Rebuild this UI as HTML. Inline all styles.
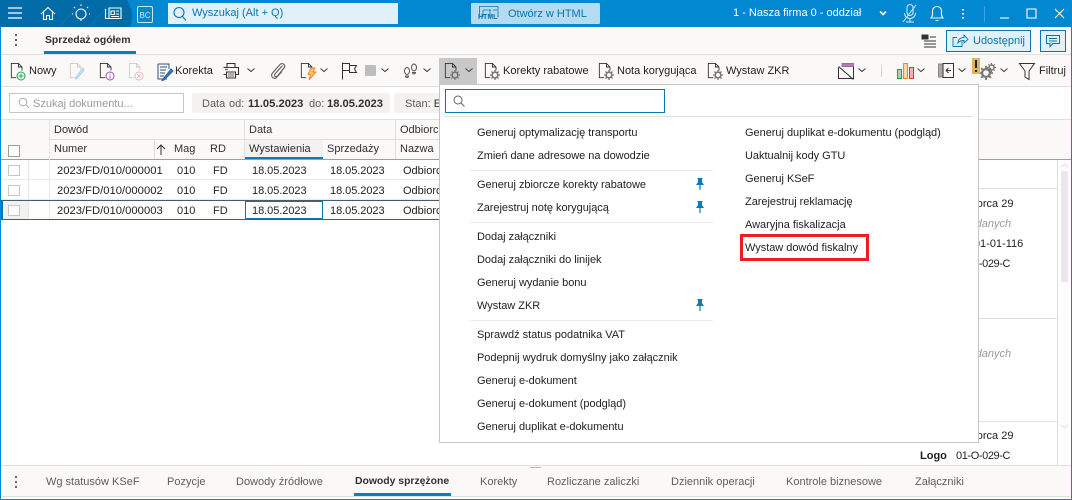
<!DOCTYPE html>
<html lang="pl"><head><meta charset="utf-8"><title>Sprzedaż ogółem</title>
<style>
*{box-sizing:border-box}
html,body{margin:0;padding:0;background:#fff}
body{width:1072px;height:500px;overflow:hidden;position:relative;font-family:"Liberation Sans",Arial,sans-serif;font-size:11px;color:#201f1e}
.a,.t,svg.i{position:absolute}
.t{white-space:nowrap;line-height:16px;height:16px;margin-top:1px}
.g{color:#605e5c}
.h{color:#323130}
.d{font-size:11px;letter-spacing:-.05px}
.n{font-size:11.25px}
svg.i{overflow:visible;fill:none;stroke:#323130;stroke-width:1}
.m{font-size:11px;letter-spacing:-.03px}
</style></head><body>
<svg width="0" height="0" style="position:absolute">
<defs>
<symbol id="doc" viewBox="0 0 18 20" overflow="visible"><path d="M7 17.500H1.500V1.500h8l4 4v4M9.500 1.500v4h4" fill="none" stroke="currentColor"/></symbol>
<symbol id="chev" viewBox="0 0 8 5" overflow="visible"><path d="M.5 .5L4 3.500 7.500 .5" fill="none" stroke="#444" stroke-width="1.100"/></symbol>
<symbol id="gear" viewBox="0 0 10 10" overflow="visible"><circle cx="5" cy="5" r="2.800" fill="none" stroke="#777" stroke-width="1.600"/><path d="M5 0v2M5 8v2M0 5h2M8 5h2M1.500 1.500l1.400 1.400M7.100 7.100l1.400 1.400M8.500 1.500L7.100 2.900M2.900 7.100L1.500 8.500" stroke="#777" stroke-width="1.300"/></symbol>
<symbol id="pin" viewBox="0 0 10 12" overflow="visible"><path d="M2 0h6L7 1v3l2 3H1l2-3V1z" fill="#0a7cb8"/><path d="M5 6v6" stroke="#0a7cb8" stroke-width="1.200"/></symbol>
</defs>
</svg>

<!-- title bar -->
<div class="a" style="left:0;top:0;width:1072px;height:27px;background:#0288d1"></div>
<svg class="i" style="left:0;top:0;stroke:none" width="140" height="27"><path d="M0 0H127Q135 13 130 27H0z" fill="#006ba6"/><path d="M90 27L112 0M60 27L82 0" stroke="#0a78b4" stroke-width=".7"/></svg>
<svg class="i" style="left:0;top:0;stroke:#fff" width="140" height="27">
<path d="M8 8h14M8 13h14M8 18h14" stroke-width="1.200"/>
<path d="M41 14l7-6.500 7 6.500M43.500 12.500v7h3v-4h3v4h3v-7" stroke-width="1.100"/>
<circle cx="81" cy="14" r="5" stroke-width="1.100"/><path d="M81 19v2M81 4.500v1.500M73 14h-1M90 14h-1M75 8l-1-1M87 8l1-1" stroke-width="1.100"/>
<path d="M105.500 9v9.500h15.500V8h-12v10.500M111 11h3.500v3.500H111zM116 11h3M116 14h3M111 16.500h8" stroke-width="1.100"/>
</svg>
<div class="a" style="left:137px;top:6px;width:16px;height:17px;border:1px solid #cfe8f6;border-radius:2px;color:#cfe8f6;font-size:8px;line-height:17px;text-align:center">BC</div>
<div class="a" style="left:168px;top:3px;width:230px;height:21px;background:#e1f1fa"></div>
<svg class="i" style="left:172px;top:6px;stroke:#0a76ae" width="16" height="16"><circle cx="7" cy="6.500" r="5" stroke-width="1.100"/><path d="M10.500 10.500l3.500 4" stroke-width="1.100"/></svg>
<div class="t" style="left:192px;top:4px;color:#0a76ae;font-size:11px">Wyszukaj (Alt + Q)</div>
<div class="a" style="left:471px;top:3px;width:129px;height:21px;background:#b3dbf2;border-radius:1px"></div>
<svg class="i" style="left:479px;top:6px;stroke:#0a76ae" width="20" height="12"><path d="M0 .5h19M.5 .5v11M19 .5v11M4 4h8M14 4h4M4 4v7M11 4v7" stroke-width=".8"/></svg>
<div class="t" style="left:478px;top:12px;color:#0a76ae;font-size:7px;font-weight:bold;line-height:10px;height:10px">HTML</div>
<div class="t" style="left:508px;top:5px;color:#0a76ae;font-size:11px">Otwórz w HTML</div>
<div class="t" style="left:733px;top:4px;color:#fff;font-size:11px">1 - Nasza firma 0 - oddział</div>
<svg class="i" style="left:880px;top:0;stroke:#fff" width="192" height="27">
<path d="M0 11.500l3 3 3-3" stroke-width="1.700"/>
<path d="M27 7.500a3 3 0 0 1 6 0v5a3 3 0 0 1-6 0zM24.500 13a5.500 5.500 0 0 0 11 0M30 18.500v3M26 22h8M23 22L36 5" stroke-width="1" stroke="#d5ecf8"/>
<path d="M51 18c2-2 1.500-4 1.500-7a4.500 4.500 0 0 1 9 0c0 3-.5 5 1.500 7zM55.500 20.500h3" stroke-width="1.100" stroke="#e9f5fc"/>
<path d="M83 9v1.500M83 13v1.500M83 17v1.500" stroke-width="2"/>
<path d="M104.500 6v16" stroke="#3fa3dc"/>
<path d="M120 18h9" stroke-width="1.100"/><path d="M147 9h9v9h-9z" stroke-width="1.100"/><path d="M175 9l9 9M184 9l-9 9" stroke-width="1"/>
</svg>

<!-- outer window border -->
<div class="a" style="left:0;top:27px;width:1px;height:473px;background:#0288d1"></div>
<div class="a" style="left:1071px;top:27px;width:1px;height:473px;background:#0288d1"></div>
<div class="a" style="left:0;top:499px;width:1072px;height:1px;background:#0288d1"></div>

<!-- tab row -->
<div class="a" style="left:1px;top:27px;width:1070px;height:59px;background:#faf9f8"></div>
<div class="a" style="left:1px;top:54px;width:1070px;height:1px;background:#e1dfdd"></div>
<div class="a" style="left:1px;top:86px;width:1070px;height:1px;background:#e1dfdd"></div>
<svg class="i" style="left:13px;top:33px;stroke:none" width="6" height="14"><circle cx="3" cy="2" r="1.100" fill="#555"/><circle cx="3" cy="7" r="1.100" fill="#555"/><circle cx="3" cy="12" r="1.100" fill="#555"/></svg>
<div class="t" style="left:45px;top:32px;font-weight:bold;font-size:10.400px;color:#323130">Sprzedaż ogółem</div>
<div class="a" style="left:44px;top:51px;width:92px;height:3px;background:#0a7cc0"></div>
<svg class="i" style="left:921px;top:34px;stroke:#333" width="16" height="14"><path d="M1 1h6v4H1zM9 3h6M5 5v0M3 7h12M3 10h12M3 13h12" stroke-width="1"/><path d="M1 1h5v3H1z" fill="#333"/></svg>
<div class="a" style="left:946px;top:30px;width:85px;height:22px;background:#e1f1fa;border:1px solid #0a76ae"></div>
<svg class="i" style="left:952px;top:34px;stroke:#0a76ae" width="16" height="14"><path d="M10 7.500V12.500H1V3.500h4M6 9c0-4 3-5.500 6-5.500V1l4 4.500L12 9V6.500C9.500 6.500 7.500 7 6 9z" stroke-width=".9"/></svg>
<div class="t" style="left:973px;top:32px;color:#0a76ae;font-size:11px">Udostępnij</div>
<div class="a" style="left:1040px;top:30px;width:26px;height:22px;background:#e1f1fa;border:1px solid #0a76ae"></div>
<svg class="i" style="left:1046px;top:35px;stroke:#0a76ae" width="14" height="13"><path d="M.5 .5h13v8H7l-3 3v-3H.5zM3 3.500h8M3 6h8" stroke-width="1"/></svg>

<!-- toolbar -->
<div class="a" style="left:439px;top:58px;width:38px;height:26px;background:#c8c8c8"></div>
<svg class="i" style="left:10px;top:62px;color:#333" width="16" height="18"><use href="#doc" width="16" height="18"/></svg>
<svg class="i" style="left:16px;top:71px;stroke:#1aa34a" width="10" height="10"><circle cx="5" cy="5" r="4" fill="#fff"/><path d="M5 2.500v5M2.500 5h5"/></svg>
<div class="t" style="left:29px;top:62px">Nowy</div>
<svg class="i" style="left:69px;top:62px;color:#ccc" width="16" height="18"><use href="#doc" width="16" height="18"/></svg>
<svg class="i" style="left:75px;top:67px;stroke:#a9cfe8" width="10" height="12"><path d="M8 1L1 10l-.5 2 2-1L9 3z" fill="#cfe4f3"/></svg>
<svg class="i" style="left:99px;top:62px;color:#333" width="16" height="18"><use href="#doc" width="16" height="18"/></svg>
<svg class="i" style="left:105px;top:71px;stroke:#9b4fa8" width="10" height="10"><circle cx="5" cy="5" r="4" fill="#fff"/><path d="M5 4.500v3M5 2.500v1"/></svg>
<svg class="i" style="left:128px;top:62px;color:#ccc" width="16" height="18"><use href="#doc" width="16" height="18"/></svg>
<svg class="i" style="left:134px;top:71px;stroke:#f0b4b4" width="10" height="10"><circle cx="5" cy="5" r="4" fill="#fff"/><path d="M3.300 3.300l3.400 3.400M6.700 3.300l-3.400 3.400"/></svg>
<svg class="i" style="left:157px;top:62px;stroke:#2b5f9e" width="16" height="18"><path d="M1 2h11v5M1 2v15h9M3 5h7M3 8h6M3 11h5M3 14h4" stroke="#324f78"/><path d="M14 7L6 17l-1 1.500 2-.5 9-9z" fill="#2f7fc4"/></svg>
<div class="t" style="left:175px;top:62px">Korekta</div>
<svg class="i" style="left:223px;top:62px;stroke:#333" width="16" height="17"><path d="M4 5V1.500h8V5M.5 5.500h15v7h-3M3.500 12.500h-3M3.500 10h9v6h-9z" stroke-width="1.100"/><path d="M2 7.500h3" stroke="#0a7cc0" stroke-width="1.200"/><path d="M5 12h6M5 14h6" stroke-width=".8"/></svg>
<svg class="i" style="left:247px;top:68px" width="8" height="5"><use href="#chev" width="8" height="5"/></svg>
<svg class="i" style="left:270px;top:62px;stroke:#666" width="15" height="17"><path d="M12.500 3.500L5 12c-1.500 2 1 3.500 2.500 2L14 6c2-3-1.500-6-4-3.500L2.500 11C0 14 3.500 18 6.500 15.500L12 9.500" stroke-width="1.200"/></svg>
<svg class="i" style="left:300px;top:62px;color:#333" width="16" height="18"><use href="#doc" width="16" height="18"/></svg>
<svg class="i" style="left:307px;top:68px;stroke:#f08a24" width="9" height="13"><path d="M4 0h4L6 4h3L2 12l1.500-5.500H1z" fill="#fcc37d"/></svg>
<svg class="i" style="left:320px;top:68px" width="8" height="5"><use href="#chev" width="8" height="5"/></svg>
<svg class="i" style="left:342px;top:62px;stroke:#333" width="16" height="18"><path d="M.5 .5v17M.5 1.500h7v2h7l-2 3.500 2 3.500h-7v-2h-7" stroke-width="1"/><path d="M7.500 1.500v6.500"/></svg>
<div class="a" style="left:365px;top:65px;width:11px;height:11px;background:#bdbdbd;border-radius:1px"></div>
<svg class="i" style="left:381px;top:68px" width="8" height="5"><use href="#chev" width="8" height="5"/></svg>
<svg class="i" style="left:403px;top:63px;stroke:#555" width="16" height="16"><ellipse cx="4" cy="8" rx="2.500" ry="3.500"/><path d="M2.500 13a1.500 1.500 0 0 0 3 0z"/><ellipse cx="11" cy="4.500" rx="2.500" ry="3.500"/><path d="M9.500 9.500a1.500 1.500 0 0 0 3 0z"/></svg>
<svg class="i" style="left:423px;top:68px" width="8" height="5"><use href="#chev" width="8" height="5"/></svg>
<svg class="i" style="left:444px;top:62px;color:#333" width="16" height="18"><use href="#doc" width="16" height="18"/></svg>
<svg class="i" style="left:450px;top:70px;stroke:none" width="10" height="10"><use href="#gear" width="10" height="10"/></svg>
<svg class="i" style="left:465px;top:68px" width="8" height="5"><use href="#chev" width="8" height="5"/></svg>
<svg class="i" style="left:484px;top:62px;color:#333" width="16" height="18"><use href="#doc" width="16" height="18"/></svg>
<svg class="i" style="left:490px;top:70px;stroke:none" width="10" height="10"><use href="#gear" width="10" height="10"/></svg>
<div class="t" style="left:503px;top:62px">Korekty rabatowe</div>
<svg class="i" style="left:598px;top:62px;color:#333" width="16" height="18"><use href="#doc" width="16" height="18"/></svg>
<svg class="i" style="left:604px;top:70px;stroke:none" width="10" height="10"><use href="#gear" width="10" height="10"/></svg>
<div class="t" style="left:617px;top:62px">Nota korygująca</div>
<svg class="i" style="left:707px;top:62px;color:#333" width="16" height="18"><use href="#doc" width="16" height="18"/></svg>
<svg class="i" style="left:713px;top:70px;stroke:none" width="10" height="10"><use href="#gear" width="10" height="10"/></svg>
<div class="t" style="left:726px;top:62px">Wystaw ZKR</div>
<svg class="i" style="left:838px;top:63px;stroke:#333" width="16" height="17"><path d="M4 .5h11.500v3H4z" fill="#b57ab5" stroke="#a868a8"/><path d="M15.500 3.500v12H.5v-11"/><path d="M.5 3.500l15 13" stroke-width="1.100"/></svg>
<svg class="i" style="left:858px;top:68px" width="8" height="5"><use href="#chev" width="8" height="5"/></svg>
<div class="a" style="left:881px;top:65px;width:1px;height:12px;background:#d5d3d1"></div>
<svg class="i" style="left:897px;top:63px" width="17" height="16"><path d="M.5 6.500h4v9h-4z" fill="#a5d6b2" stroke="#1aa34a"/><path d="M6.500 .5h4v15h-4z" fill="#fbd9a5" stroke="#ef8a1d"/><path d="M12.500 4.500h4v11h-4z" fill="#f7aeae" stroke="#e8333a"/></svg>
<svg class="i" style="left:917px;top:68px" width="8" height="5"><use href="#chev" width="8" height="5"/></svg>
<svg class="i" style="left:938px;top:63px;stroke:#333" width="16" height="15"><path d="M.5 1h4.500v13H.5z" fill="#aaa" stroke="#888"/><path d="M5 .5h10.500v14H5z" stroke-width="1"/><path d="M8 7.500h5M8 7.500l2.500-2.500M8 7.500l2.500 2.500"/></svg>
<svg class="i" style="left:958px;top:68px" width="8" height="5"><use href="#chev" width="8" height="5"/></svg>
<svg class="i" style="left:979px;top:66px;stroke:none" width="14" height="14"><use href="#gear" width="14" height="14"/></svg>
<svg class="i" style="left:987px;top:63px;stroke:none" width="9" height="9"><use href="#gear" width="9" height="9"/></svg>
<div class="a" style="left:972px;top:58px;width:8px;height:16px;background:#deb35f"></div>
<div class="a" style="left:975px;top:60px;width:2px;height:8px;background:#222"></div>
<div class="a" style="left:975px;top:70px;width:2px;height:2px;background:#222"></div>
<svg class="i" style="left:1000px;top:68px" width="8" height="5"><use href="#chev" width="8" height="5"/></svg>
<svg class="i" style="left:1019px;top:63px;stroke:#333" width="16" height="17"><path d="M.5 .5h15L10 8v8.500L6 14V8z"/></svg>
<div class="t" style="left:1039px;top:62px">Filtruj</div>

<!-- filter row -->
<div class="a" style="left:9px;top:93px;width:175px;height:20px;border:1px solid #c8c6c4;background:#fff"></div>
<svg class="i" style="left:18px;top:97px;stroke:#aaa" width="12" height="12"><circle cx="5" cy="5" r="3.800"/><path d="M8 8l3 3"/></svg>
<div class="t" style="left:33px;top:95px;color:#999">Szukaj dokumentu...</div>
<div class="a" style="left:192px;top:93px;width:198px;height:20px;background:#f3f2f1;border-radius:2px"></div>
<div class="t g" style="left:202px;top:95px">Data</div>
<div class="t g" style="left:229px;top:95px">od:</div>
<div class="t h" style="left:248px;top:95px;font-weight:bold;font-size:11.200px">11.05.2023</div>
<div class="t g" style="left:309px;top:95px">do:</div>
<div class="t h" style="left:327px;top:95px;font-weight:bold;font-size:11.200px">18.05.2023</div>
<div class="a" style="left:394px;top:93px;width:60px;height:20px;background:#f3f2f1;border-radius:2px"></div>
<div class="t g" style="left:405px;top:95px">Stan: <span class="h">E</span></div>

<!-- grid -->
<div class="a" style="left:1px;top:119px;width:1070px;height:40px;background:#faf9f8"></div>
<div class="a" style="left:1px;top:119px;width:1070px;height:1px;background:#e1dfdd"></div>
<div class="a" style="left:49px;top:139px;width:930px;height:1px;background:#e1dfdd"></div>
<div class="a" style="left:1px;top:159px;width:1070px;height:1px;background:#a19f9d"></div>
<div class="a" style="left:49px;top:120px;width:1px;height:99px;background:#e8e6e4"></div>
<div class="a" style="left:244px;top:120px;width:1px;height:39px;background:#e1dfdd"></div>
<div class="a" style="left:395px;top:120px;width:1px;height:39px;background:#e1dfdd"></div>
<div class="a" style="left:154px;top:140px;width:1px;height:19px;background:#e1dfdd"></div>
<div class="a" style="left:28px;top:160px;width:1px;height:59px;background:#e8e6e4"></div>
<div class="a" style="left:245px;top:140px;width:78px;height:19px;background:#f3f2f1"></div>
<div class="a" style="left:245px;top:157px;width:78px;height:2px;background:#0a7cc0"></div>
<div class="t h" style="left:54px;top:121px">Dowód</div>
<div class="t h" style="left:249px;top:121px">Data</div>
<div class="t h" style="left:400px;top:121px">Odbiorca</div>
<div class="t h" style="left:54px;top:140px">Numer</div>
<svg class="i" style="left:156px;top:144px;stroke:#333" width="10" height="11"><path d="M5 1v10M1 5l4-4 4 4"/></svg>
<div class="t h" style="left:174px;top:140px">Mag</div>
<div class="t h" style="left:210px;top:140px">RD</div>
<div class="t h" style="left:249px;top:140px">Wystawienia</div>
<div class="t h" style="left:327px;top:140px">Sprzedaży</div>
<div class="t h" style="left:400px;top:140px">Nazwa</div>
<div class="a" style="left:8px;top:145px;width:12px;height:12px;border:1px solid #a19f9d;background:#fff"></div>
<div class="a" style="left:1px;top:179px;width:440px;height:1px;background:#edebe9"></div>
<div class="a" style="left:1px;top:199px;width:440px;height:1px;background:#edebe9"></div>
<div class="a" style="left:8px;top:165px;width:12px;height:11px;border:1px solid #c8c6c4"></div>
<div class="a" style="left:8px;top:185px;width:12px;height:11px;border:1px solid #c8c6c4"></div>
<div class="a" style="left:1px;top:200px;width:440px;height:20px;border-top:1px solid #3e5f74;border-bottom:1px solid #3e5f74"></div>
<div class="a" style="left:3px;top:201px;width:25px;height:18px;background:#f3f2f1"></div>
<div class="a" style="left:1px;top:201px;width:2px;height:18px;background:#0a76ae"></div>
<div class="a" style="left:8px;top:205px;width:12px;height:11px;border:1px solid #c8c6c4;background:#fff"></div>
<div class="a" style="left:245px;top:201px;width:78px;height:18px;border:1px solid #0a76ae;border-width:1px 1.500px"></div>
<div class="t n" style="left:57px;top:162px">2023/FD/010/000001</div>
<div class="t" style="left:177px;top:162px">010</div><div class="t" style="left:213px;top:162px">FD</div><div class="t d" style="left:252px;top:162px">18.05.2023</div><div class="t d" style="left:330px;top:162px">18.05.2023</div><div class="t" style="left:403px;top:162px">Odbiorca</div>
<div class="t n" style="left:57px;top:182px">2023/FD/010/000002</div>
<div class="t" style="left:177px;top:182px">010</div><div class="t" style="left:213px;top:182px">FD</div><div class="t d" style="left:252px;top:182px">18.05.2023</div><div class="t d" style="left:330px;top:182px">18.05.2023</div><div class="t" style="left:403px;top:182px">Odbiorca</div>
<div class="t n" style="left:57px;top:202px">2023/FD/010/000003</div>
<div class="t" style="left:177px;top:202px">010</div><div class="t" style="left:213px;top:202px">FD</div><div class="t d" style="left:252px;top:202px">18.05.2023</div><div class="t d" style="left:330px;top:202px">18.05.2023</div><div class="t" style="left:403px;top:202px">Odbiorca</div>

<!-- right detail pane -->
<div class="a" style="left:900px;top:188px;width:157px;height:1px;background:#e1dfdd"></div>
<div class="a" style="left:900px;top:318px;width:157px;height:1px;background:#e1dfdd"></div>
<div class="a" style="left:900px;top:421px;width:157px;height:1px;background:#e1dfdd"></div>
<div class="a" style="left:1057px;top:160px;width:1px;height:305px;background:#e1dfdd"></div>
<div class="a" style="left:1061px;top:171px;width:7px;height:111px;background:#e8e8e8"></div>
<svg class="i" style="left:1060px;top:163px;stroke:#ddd" width="9" height="5"><path d="M1 4l3.500-3L8 4"/></svg>
<svg class="i" style="left:1060px;top:424px;stroke:#ddd" width="9" height="5"><path d="M1 1l3.500 3L8 1"/></svg>
<div class="t" style="left:926px;top:195px">Ulica Odbiorca 29</div>
<div class="t" style="left:950px;top:215px;color:#999;font-style:italic">Brak danych</div>
<div class="t" style="left:936px;top:235px">00-001-01-01-116</div>
<div class="t" style="left:956px;top:255px;letter-spacing:-.4px">01-O-029-C</div>
<div class="t" style="left:950px;top:345px;color:#999;font-style:italic">Brak danych</div>
<div class="t" style="left:926px;top:427px">Ulica Odbiorca 29</div>
<div class="t" style="left:920px;top:447px;font-weight:bold">Logo</div>
<div class="t" style="left:956px;top:447px;letter-spacing:-.4px">01-O-029-C</div>

<!-- dropdown menu -->
<div class="a" style="left:439px;top:84px;width:540px;height:359px;background:#fff;border:1px solid #c8c6c4"></div>
<div class="a" style="left:445px;top:89px;width:220px;height:24px;border:1px solid #0a76ae;background:#fff"></div>
<svg class="i" style="left:453px;top:95px;stroke:#666" width="12" height="12"><circle cx="5" cy="5" r="4"/><path d="M8 8l3.500 3.500"/></svg>
<div class="a" style="left:445px;top:116px;width:528px;height:1px;background:#e1dfdd"></div>
<div class="a" style="left:470px;top:170px;width:243px;height:1px;background:#edebe9"></div>
<div class="a" style="left:470px;top:222px;width:243px;height:1px;background:#edebe9"></div>
<div class="a" style="left:470px;top:320px;width:243px;height:1px;background:#edebe9"></div>
<div class="t m" style="left:477px;top:124px">Generuj optymalizację transportu</div>
<div class="t m" style="left:477px;top:147px">Zmień dane adresowe na dowodzie</div>
<div class="t m" style="left:477px;top:176px">Generuj zbiorcze korekty rabatowe</div>
<div class="t m" style="left:477px;top:199px">Zarejestruj notę korygującą</div>
<div class="t m" style="left:477px;top:228px">Dodaj załączniki</div>
<div class="t m" style="left:477px;top:251px">Dodaj załączniki do linijek</div>
<div class="t m" style="left:477px;top:274px">Generuj wydanie bonu</div>
<div class="t m" style="left:477px;top:297px">Wystaw ZKR</div>
<div class="t m" style="left:477px;top:326px">Sprawdź status podatnika VAT</div>
<div class="t m" style="left:477px;top:349px">Podepnij wydruk domyślny jako załącznik</div>
<div class="t m" style="left:477px;top:372px">Generuj e-dokument</div>
<div class="t m" style="left:477px;top:395px">Generuj e-dokument (podgląd)</div>
<div class="t m" style="left:477px;top:418px">Generuj duplikat e-dokumentu</div>
<svg class="i" style="left:695px;top:178px;stroke:none" width="10" height="12"><use href="#pin" width="10" height="12"/></svg>
<svg class="i" style="left:695px;top:201px;stroke:none" width="10" height="12"><use href="#pin" width="10" height="12"/></svg>
<svg class="i" style="left:695px;top:299px;stroke:none" width="10" height="12"><use href="#pin" width="10" height="12"/></svg>
<div class="t m" style="left:745px;top:124px">Generuj duplikat e-dokumentu (podgląd)</div>
<div class="t m" style="left:745px;top:147px">Uaktualnij kody GTU</div>
<div class="t m" style="left:745px;top:170px">Generuj KSeF</div>
<div class="t m" style="left:745px;top:193px">Zarejestruj reklamację</div>
<div class="t m" style="left:745px;top:216px">Awaryjna fiskalizacja</div>
<div class="t m" style="left:745px;top:239px">Wystaw dowód fiskalny</div>
<div class="a" style="left:740px;top:234px;width:129px;height:27px;border:3px solid #ee1c25"></div>

<!-- bottom tabs -->
<div class="a" style="left:1px;top:465px;width:1070px;height:1px;background:#e1dfdd"></div>
<div class="a" style="left:1px;top:466px;width:1070px;height:30px;background:#faf9f8"></div>
<div class="a" style="left:1px;top:496px;width:1070px;height:1px;background:#e1dfdd"></div>
<div class="a" style="left:530px;top:467px;width:11px;height:1px;background:#bbb"></div>
<svg class="i" style="left:13px;top:475px;stroke:none" width="6" height="14"><circle cx="3" cy="2" r="1.100" fill="#555"/><circle cx="3" cy="7" r="1.100" fill="#555"/><circle cx="3" cy="12" r="1.100" fill="#555"/></svg>
<div class="t g" style="left:46px;top:473px">Wg statusów KSeF</div>
<div class="t g" style="left:167px;top:473px">Pozycje</div>
<div class="t g" style="left:236px;top:473px">Dowody źródłowe</div>
<div class="t" style="left:355px;top:473px;font-weight:bold;font-size:10.400px;color:#323130">Dowody sprzężone</div>
<div class="a" style="left:354px;top:493px;width:97px;height:3px;background:#0a7cc0"></div>
<div class="t g" style="left:480px;top:473px">Korekty</div>
<div class="t g" style="left:547px;top:473px">Rozliczane zaliczki</div>
<div class="t g" style="left:671px;top:473px">Dziennik operacji</div>
<div class="t g" style="left:786px;top:473px">Kontrole biznesowe</div>
<div class="t g" style="left:915px;top:473px">Załączniki</div>
</body></html>
